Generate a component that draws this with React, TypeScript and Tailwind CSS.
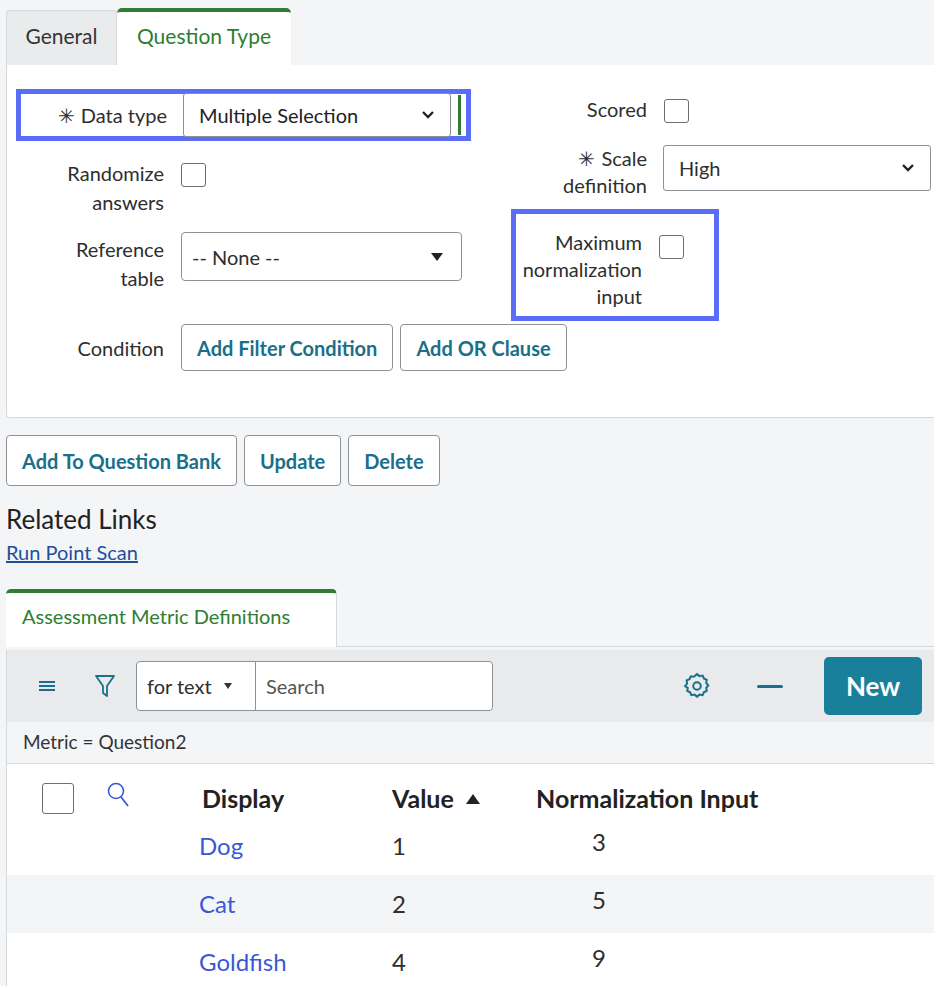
import React from 'react';

const font = { fontFamily: 'Lato, "Open Sans", sans-serif' };

const Check = ({ className = '' }: { className?: string }) => (
  <div className={`w-[25px] h-[24px] shrink-0 border border-[#6b6f73] rounded-[3px] bg-white ${className}`} />
);

const Btn = ({ children, className = '' }: { children: React.ReactNode; className?: string }) => (
  <button className={`h-[47px] px-[15px] shrink-0 whitespace-nowrap border border-[#8d9297] rounded-[4px] bg-white text-[#1a6f8a] font-bold text-[20px] ${className}`}>
    {children}
  </button>
);

const Chevron = () => (
  <svg width="14" height="10" viewBox="0 0 14 10"><path d="M2 2l5 5 5-5" fill="none" stroke="#222" strokeWidth="2.4" /></svg>
);

export default function App() {
  return (
    <div style={font} className="w-[934px] h-[986px] overflow-hidden bg-[#f4f5f7] text-[#2e2e2e] text-[20px]">
      {/* Tabs */}
      <div className="flex pt-[8px] pl-[6px]">
        <div className="w-[111px] h-[55px] mt-[2px] bg-[#e9ebed] border border-[#d6d9dc] border-b-0 rounded-t-[4px] flex items-center justify-center text-[#333] text-[21px] pb-[4px]">General</div>
        <div className="w-[174px] h-[57px] bg-white border-t-[4px] border-[#2e7d32] rounded-t-[5px] flex items-center justify-center text-[#2e7d32] text-[21px] pb-[6px]">Question Type</div>
      </div>

      {/* Form panel */}
      <div className="ml-[6px] h-[353px] bg-white border-l border-b border-[#d6d9dc] rounded-bl-[4px]">
        <div className="flex">
          {/* left column */}
          <div className="w-[504px] shrink-0 pt-[24px]">
            <div className="ml-[9px] w-[455px] h-[52px] border-[5px] border-[#5b6cf6] flex items-center">
              <div className="w-[162px] text-right pr-[16px] whitespace-nowrap">
                <span className="mr-[6px]">✳︎</span>Data type
              </div>
              <div className="w-[268px] h-[44px] border border-[#8d9297] rounded-[3px] flex items-center justify-between px-[15px] text-[#222]">
                <span>Multiple Selection</span><Chevron />
              </div>
              <div className="w-[3px] h-[40px] bg-[#2e7d32] ml-[7px]" />
            </div>
            <div className="flex mt-[18px]">
              <div className="w-[157px] text-right leading-[29px]">Randomize<br />answers</div>
              <Check className="ml-[17px] mt-[4px]" />
            </div>
            <div className="flex mt-[18px]">
              <div className="w-[157px] text-right leading-[29px]">Reference<br />table</div>
              <div className="ml-[17px] w-[281px] h-[49px] border border-[#8d9297] rounded-[4px] flex items-center justify-between pl-[10px] pr-[18px] -mt-[3px]">
                <span>-- None --</span>
                <svg width="12" height="8" viewBox="0 0 12 8"><path d="M0 0h12L6 8z" fill="#222" /></svg>
              </div>
            </div>
            <div className="flex items-center mt-[31px]">
              <div className="w-[157px] shrink-0 text-right">Condition</div>
              <Btn className="ml-[17px]">Add Filter Condition</Btn>
              <Btn className="ml-[7px]">Add OR Clause</Btn>
            </div>
          </div>
          {/* right column */}
          <div className="flex-1 pt-[30px]">
            <div className="flex">
              <div className="w-[136px] text-right leading-[29px]">Scored</div>
              <Check className="ml-[17px] mt-[4px]" />
            </div>
            <div className="flex mt-[26px]">
              <div className="w-[136px] text-right leading-[27px] -mt-[5px]"><span className="mr-[6px]">✳︎</span>Scale<br />definition</div>
              <div className="ml-[16px] w-[268px] h-[46px] border border-[#8d9297] rounded-[3px] flex items-center justify-between px-[15px] -mt-[5px]">
                <span>High</span><Chevron />
              </div>
            </div>
            <div className="mt-[10px] w-[208px] h-[112px] border-[5px] border-[#5b6cf6] flex">
              <div className="w-[131px] text-right leading-[27px] pt-[15px] -ml-[5px]">Maximum<br />normalization<br />input</div>
              <Check className="ml-[17px] mt-[21px]" />
            </div>
          </div>
        </div>
      </div>

      {/* Action buttons */}
      <div className="flex gap-[7px] ml-[6px] mt-[17px]">
        <Btn className="h-[51px]">Add To Question Bank</Btn>
        <Btn className="h-[51px]">Update</Btn>
        <Btn className="h-[51px]">Delete</Btn>
      </div>

      <div className="ml-[6px] mt-[14px] text-[26px] text-[#222]">Related Links</div>
      <div className="ml-[6px] -mt-[2px] text-[#1f4e9e] underline text-[20px]">Run Point Scan</div>

      {/* Related list tab */}
      <div className="ml-[6px] mt-[22px] flex">
        <div className="w-[331px] h-[58px] bg-white border-t-[4px] border-[#2e7d32] rounded-t-[5px] border-r border-r-[#d6d9dc] flex items-center pl-[16px] pb-[8px] text-[#2e7d32] text-[20px]">
          Assessment Metric Definitions
        </div>
        <div className="flex-1 border-b border-[#d6d9dc]" />
      </div>

      <div className="ml-[6px] bg-white border-l border-[#d6d9dc]">
        <div className="h-[72px] mt-[3px] bg-[#e8eaec] flex items-center pl-[30px] pr-[12px]">
          <svg width="20" height="16" viewBox="0 0 20 16"><path d="M2 4h16M2 8h16M2 12h16" stroke="#1a6f8a" strokeWidth="2.2" /></svg>
          <svg className="ml-[37px]" width="22" height="26" viewBox="0 0 22 26"><path d="M2 3h18l-7 10v10l-4-3v-7z" fill="none" stroke="#1a6f8a" strokeWidth="1.8" strokeLinejoin="round" /></svg>
          <div className="ml-[20px] w-[357px] h-[50px] border border-[#8d9297] rounded-[4px] bg-white flex">
            <div className="w-[119px] border-r border-[#8d9297] flex items-center pl-[10px] gap-[12px]">
              <span>for text</span>
              <svg width="8" height="6" viewBox="0 0 8 6"><path d="M0 0h8L4 6z" fill="#333" /></svg>
            </div>
            <div className="flex items-center pl-[10px] text-[#555]">Search</div>
          </div>
          <div className="flex-1" />
          <svg width="30" height="30" viewBox="0 0 24 24" fill="none" stroke="#1a6f8a" strokeWidth="1.6"><circle cx="12" cy="12" r="3" /><path d="M12 2.5l2 1.6 2.5-.4 1 2.3 2.3 1-.4 2.5 1.6 2-1.6 2 .4 2.5-2.3 1-1 2.3-2.5-.4-2 1.6-2-1.6-2.5.4-1-2.3-2.3-1 .4-2.5L2.5 12l1.6-2-.4-2.5 2.3-1 1-2.3 2.5.4z" /></svg>
          <div className="ml-[45px] w-[26px] h-[3px] bg-[#1a6f8a] rounded" />
          <div className="ml-[41px] w-[98px] h-[58px] bg-[#1a7f9b] rounded-[5px] text-white font-bold text-[26px] flex items-center justify-center">New</div>
        </div>
        <div className="h-[42px] bg-[#f4f5f7] border-b border-[#d6d9dc] flex items-center pl-[16px] text-[19px] text-[#333]">Metric = Question2</div>
        <div className="flex items-center h-[53px] pt-[16px]">
          <Check className="ml-[35px] w-[32px] h-[31px]" />
          <svg className="ml-[32px] -mt-[8px]" width="26" height="28" viewBox="0 0 26 28"><circle cx="10" cy="10" r="7.5" fill="none" stroke="#3a57d6" strokeWidth="1.6" /><path d="M15 16l7 9" stroke="#3a57d6" strokeWidth="1.8" /></svg>
          <div className="ml-[70px] w-[190px] font-bold text-[25px] text-[#222]">Display</div>
          <div className="w-[144px] font-bold text-[25px] text-[#222] flex items-center gap-[12px]">Value
            <svg width="14" height="10" viewBox="0 0 14 10"><path d="M0 10h14L7 0z" fill="#222" /></svg>
          </div>
          <div className="font-bold text-[25px] text-[#222]">Normalization Input</div>
        </div>
        {[['Dog', '1', '3', 'bg-white'], ['Cat', '2', '5', 'bg-[#f4f5f7]'], ['Goldfish', '4', '9', 'bg-white']].map(([d, v, n, bg]) => (
          <div key={d} className={`flex h-[58px] items-center text-[24px] ${bg}`}>
            <div className="ml-[192px] w-[193px] text-[#3a57d6]">{d}</div>
            <div className="w-[200px]">{v}</div>
            <div className="-mt-[8px]">{n}</div>
          </div>
        ))}
      </div>
    </div>
  );
}
